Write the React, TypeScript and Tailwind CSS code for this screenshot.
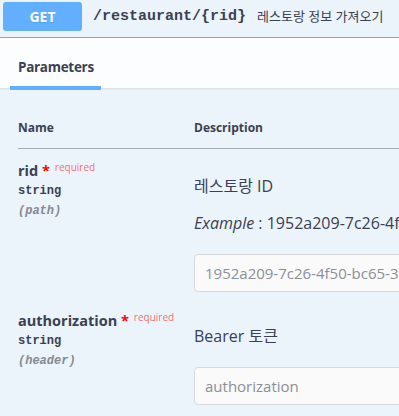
import React from "react";

type ParamProps = {
  name: string;
  location: string;
  desc: string;
  example?: string;
  placeholder: string;
};

function Param({ name, location, desc, example, placeholder }: ParamProps) {
  return (
    <div className="flex pb-[7px]">
      <div className="w-[176px] shrink-0 pt-[11px]">
        <div className="h-[20px] leading-[20px] whitespace-nowrap">
          <span className="text-[14.5px] font-bold">{name}</span>
          <span className="text-[14.5px] font-bold text-[#ff0000]">&nbsp;*</span>
          <span className="pl-[5px] text-[10px] leading-[0px] text-[rgba(255,0,0,0.6)] align-[5px]">required</span>
        </div>
        <div className="mt-[3px] leading-[16px] text-[12px] font-bold font-['Liberation_Mono',monospace]">
          string
        </div>
        <div className="mt-[4px] leading-[16px] text-[12px] font-semibold italic text-[#868a91] font-['Liberation_Mono',monospace]">
          ({location})
        </div>
      </div>
      <div className="pt-[25px] whitespace-nowrap">
        <div className="text-[16px] leading-[24px]">{desc}</div>
        {example && (
          <div className="mt-[13px] text-[16px] leading-[24px]">
            <i>Example</i> : {example}
          </div>
        )}
        <input
          readOnly
          placeholder={placeholder}
          className="mt-[19px] block w-[340px] h-[38px] border border-[#d9d9d9] rounded-[4px] bg-[#fafafa] px-[10px] text-[15px] text-[#3b4151] placeholder:text-[#8b8f98] outline-none"
        />
      </div>
    </div>
  );
}

export default function App() {
  const uuid = "1952a209-7c26-4f50-bc65-3a1e4f8b9c2d";
  return (
    <div className="w-[399px] h-[416px] overflow-hidden bg-[#ebf3fb] text-[#3b4151] font-['Open_Sans','Noto_Sans_CJK_KR',sans-serif]">
      <div className="w-[720px]">
        <div className="h-[38px] border-b border-[#61affe] pl-[3px] pt-[2px] flex items-start">
          <div className="flex items-center h-[29px] whitespace-nowrap">
            <div className="w-[79px] h-[29px] rounded-[3px] bg-[#61affe] text-white font-bold text-[14px] flex items-center justify-center [text-shadow:0_1px_0_rgba(0,0,0,0.1)]">
              GET
            </div>
            <span className="ml-[11px] pt-[1px] font-['Liberation_Mono',monospace] text-[15px] font-semibold">
              /restaurant/{"{rid}"}
            </span>
            <span className="ml-[11px] pt-[1px] text-[13px]">레스토랑 정보 가져오기</span>
          </div>
        </div>

        <div className="relative z-10 h-[50px] bg-[#fbfdff] shadow-[0_1px_2px_rgba(0,0,0,0.1)] pl-[10px] pt-[16px]">
          <div className="inline-flex flex-col">
            <span className="pl-[8px] pr-[7px] text-[13.5px] tracking-[-0.3px] leading-[20px] font-bold">
              Parameters
            </span>
            <span className="mt-[9px] h-[4px] bg-[#61affe]" />
          </div>
        </div>

        <div className="pl-[18px]">
          <div className="flex pt-[32px] pb-[12px] border-b border-[#a6adba] text-[12px] leading-[16px] font-bold">
            <div className="w-[176px]">Name</div>
            <div>Description</div>
          </div>
          <Param
            name="rid"
            location="path"
            desc="레스토랑 ID"
            example={uuid}
            placeholder={uuid}
          />
          <Param
            name="authorization"
            location="header"
            desc="Bearer 토큰"
            placeholder="authorization"
          />
        </div>
      </div>
    </div>
  );
}
